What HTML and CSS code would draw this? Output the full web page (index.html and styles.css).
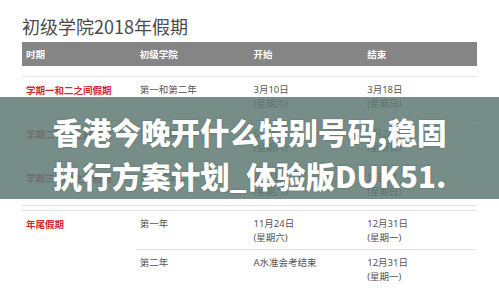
FILE: index.html
```html
<!DOCTYPE html>
<html lang="zh">
<head>
<meta charset="utf-8">
<link rel="stylesheet" href="styles.css">
</head>
<body>
<div class="page">
  <h1 class="title">初级学院2018年假期</h1>
  <div class="thead">
    <div class="th">时期</div>
    <div class="th">初级学院</div>
    <div class="th">开始</div>
    <div class="th">结束</div>
  </div>
  <div class="table">
    <div class="cell red">学期一和二之间假期</div>
    <div class="cell">第一和第二年</div>
    <div class="cell">3月10日<br>(星期六)</div>
    <div class="cell">3月18日<br>(星期日)</div>

    <div class="cell red">学期二和三之间假期</div>
    <div class="cell">第一和第二年</div>
    <div class="cell">5月26日<br>(星期六)</div>
    <div class="cell">6月24日<br>(星期日)</div>

    <div class="cell red last">学期三和四之间假期</div>
    <div class="cell last">第一和第二年</div>
    <div class="cell last">9月1日<br>(星期六)</div>
    <div class="cell last">9月9日<br>(星期日)</div>
  </div>
  <div class="table second">
    <div class="cell red span">年尾假期</div>
    <div class="cell short">第一年</div>
    <div class="cell short">11月24日<br>(星期六)</div>
    <div class="cell short">12月31日<br>(星期一)</div>
    <div class="cell sub">第二年</div>
    <div class="cell sub">A水准会考结束</div>
    <div class="cell sub">12月31日<br>(星期一)</div>
  </div>
</div>
<div class="banner">
  <p class="banner-text">香港今晚开什么特别号码,稳固<br>执行方案计划_体验版DUK51.</p>
</div>
</body>
</html>
```
FILE: styles.css
```css
html, body {
  margin: 0;
  padding: 0;
  background: #ffffff;
  width: 499px;
  height: 297px;
  overflow: hidden;
  font-family: "Noto Sans", "Noto Sans CJK SC", sans-serif;
}

.page {
  padding: 14px 22px 0;
  width: 455px;
}

.title {
  margin: 0 0 4px;
  font-family: "Noto Sans CJK SC", sans-serif;
  font-size: 18px;
  font-weight: 400;
  line-height: 24px;
  color: #4a4a4a;
}

.thead {
  display: grid;
  grid-template-columns: repeat(4, 1fr);
  height: 24px;
  background: #858585;
  align-items: center;
}

.th {
  padding-left: 4px;
  font-family: "Noto Sans CJK SC", sans-serif;
  font-size: 9.5px;
  font-weight: 700;
  color: #ffffff;
}

.table {
  display: grid;
  grid-template-columns: repeat(4, 1fr);
  margin-top: 10px;
}

.cell {
  border-top: 1px solid #e4e4e4;
  padding: 6px 4px 9px;
  font-size: 9.5px;
  line-height: 14px;
  color: #555555;
  font-family: "Noto Sans", "Noto Sans CJK SC", sans-serif;
}

.cell.last {
  padding-bottom: 6px;
  border-bottom: 1px solid #e4e4e4;
}

.red {
  color: #d7262c;
  font-weight: 700;
  font-family: "Noto Sans CJK SC", sans-serif;
}

.second {
  margin-top: 4px;
}

.span {
  grid-row: span 2;
}

.short {
  padding-bottom: 4px;
}

.sub {
  padding-bottom: 4px;
}

.banner {
  position: absolute;
  left: 0;
  top: 97px;
  width: 499px;
  height: 102px;
  background: rgba(96, 122, 116, 0.86);
  box-sizing: border-box;
  padding-top: 12px;
}

.banner-text {
  margin: 0;
  text-align: center;
  font-family: "Noto Sans CJK SC", sans-serif;
  font-weight: 900;
  font-size: 29.5px;
  line-height: 44px;
  color: #ffffff;
  text-shadow: 0 0 2px rgba(0, 0, 0, 0.25);
  white-space: nowrap;
}
```
